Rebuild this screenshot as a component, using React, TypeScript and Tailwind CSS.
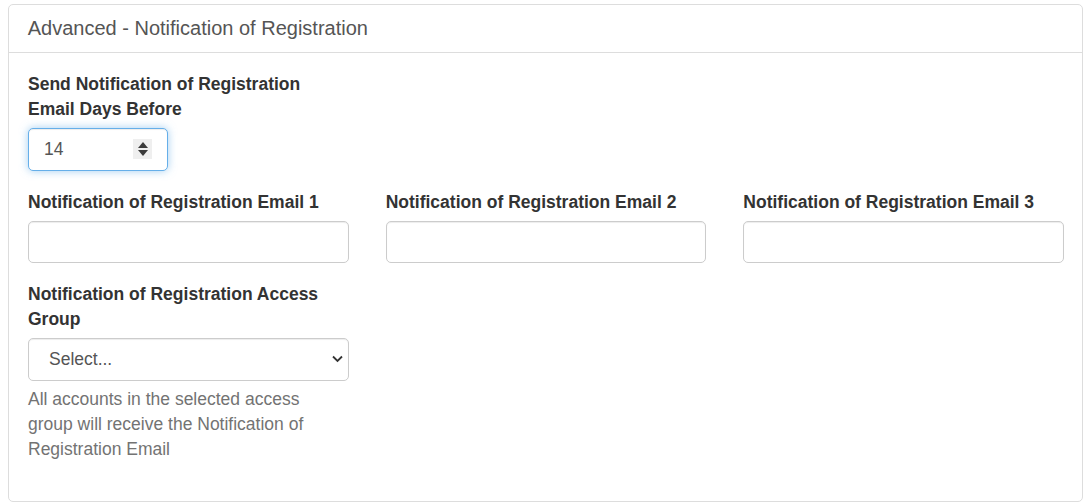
import React from 'react';

const font = { fontFamily: '"Liberation Sans", Arial, sans-serif' };

function Label({ children }: { children: React.ReactNode }) {
  return (
    <label className="block font-bold text-[17.5px] leading-[25px] text-[#333] mb-[6.25px]">
      {children}
    </label>
  );
}

function TextInput() {
  return (
    <input
      type="text"
      className="block w-full h-[42.5px] px-[15px] text-[17.5px] text-[#555] bg-white border border-[#ccc] rounded-[5px] shadow-[inset_0_1px_1px_rgba(0,0,0,0.075)] outline-none"
    />
  );
}

export default function App() {
  return (
    <div className="min-h-screen bg-white pt-[4px] pl-[8px] pr-[8px]" style={font}>
      <div className="w-[1075px] bg-white border border-[#ddd] rounded-[5px]">
        {/* Header */}
        <div className="h-[48px] px-[18.75px] pb-[2px] flex items-center border-b border-[#ddd]">
          <h3 className="text-[20px] leading-[22px] text-[#555] font-normal">
            Advanced - Notification of Registration
          </h3>
        </div>

        {/* Body */}
        <div className="pt-[19px] pb-[20px] pl-[19px] pr-[18px]">
          <div className="grid grid-cols-3 gap-x-[37px]">
            <div className="mb-[18.75px]">
              <Label>
                Send Notification of Registration
                <br />
                Email Days Before
              </Label>
              <div className="relative w-[140px]">
                <input
                  type="text"
                  defaultValue="14"
                  className="block w-full h-[42.5px] pl-[15px] pr-[30px] text-[17.5px] text-[#555] bg-white border border-[#66afe9] rounded-[5px] shadow-[inset_0_1px_1px_rgba(0,0,0,0.075),0_0_8px_rgba(102,175,233,0.6)] outline-none"
                />
                <div className="absolute left-[105px] top-[11px] w-[19px] h-[20px] bg-[#efefef] flex flex-col items-center justify-center gap-[2px]">
                  <svg width="10" height="6" viewBox="0 0 10 6">
                    <path d="M5 0 L10 6 L0 6 Z" fill="#3b3b3b" />
                  </svg>
                  <svg width="10" height="6" viewBox="0 0 10 6">
                    <path d="M0 0 L10 0 L5 6 Z" fill="#3b3b3b" />
                  </svg>
                </div>
              </div>
            </div>
            <div />
            <div />

            <div className="mb-[18.75px]">
              <Label>Notification of Registration Email 1</Label>
              <TextInput />
            </div>
            <div className="mb-[18.75px]">
              <Label>Notification of Registration Email 2</Label>
              <TextInput />
            </div>
            <div className="mb-[18.75px]">
              <Label>Notification of Registration Email 3</Label>
              <TextInput />
            </div>

            <div className="mb-[18.75px]">
              <Label>
                Notification of Registration Access
                <br />
                Group
              </Label>
              <div className="relative">
                <select
                  className="block w-full h-[42.5px] pl-[20px] pr-[30px] text-[17.5px] text-[#555] bg-white border border-[#ccc] rounded-[5px] shadow-[inset_0_1px_1px_rgba(0,0,0,0.075)] outline-none appearance-none"
                  style={font}
                  defaultValue=""
                >
                  <option value="">Select...</option>
                </select>
                <svg
                  className="absolute right-[6px] top-[17px] pointer-events-none"
                  width="11"
                  height="8"
                  viewBox="0 0 11 8"
                >
                  <path d="M1 1.5 L5.5 6 L10 1.5" fill="none" stroke="#333" strokeWidth="1.8" />
                </svg>
              </div>
              <p className="mt-[6.5px] text-[17.5px] leading-[25px] text-[#737373]">
                All accounts in the selected access
                <br />
                group will receive the Notification of
                <br />
                Registration Email
              </p>
            </div>
          </div>
        </div>
      </div>
    </div>
  );
}
